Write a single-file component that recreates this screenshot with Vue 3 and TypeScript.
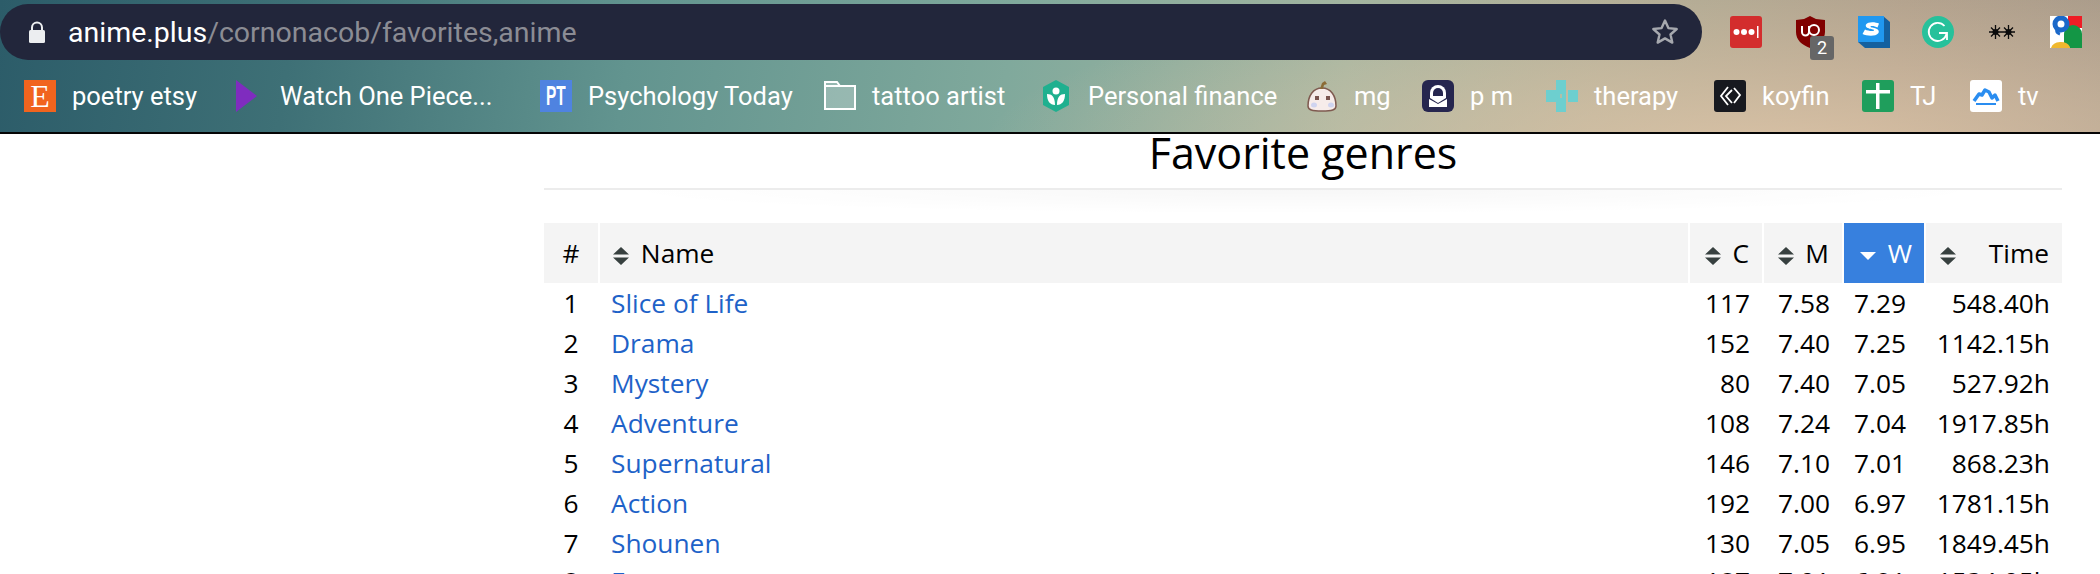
<script setup lang="ts">
type Bookmark = { icon: string; label: string; width: number };
type Genre = { name: string; c: number; m: string; w: string; time: string };

const bookmarks: Bookmark[] = [
  { icon: 'etsy', label: 'poetry etsy', width: 128 },
  { icon: 'play', label: 'Watch One Piece...', width: 228 },
  { icon: 'pt', label: 'Psychology Today', width: 204 },
  { icon: 'folder', label: 'tattoo artist', width: 136 },
  { icon: 'khan', label: 'Personal finance', width: 186 },
  { icon: 'ghost', label: 'mg', width: 36 },
  { icon: 'proton', label: 'p m', width: 44 },
  { icon: 'cross', label: 'therapy', width: 88 },
  { icon: 'koyfin', label: 'koyfin', width: 68 },
  { icon: 'tj', label: 'TJ', width: 28 },
  { icon: 'tv', label: 'tv', width: 24 },
];

const genres: Genre[] = [
  { name: 'Slice of Life', c: 117, m: '7.58', w: '7.29', time: '548.40h' },
  { name: 'Drama', c: 152, m: '7.40', w: '7.25', time: '1142.15h' },
  { name: 'Mystery', c: 80, m: '7.40', w: '7.05', time: '527.92h' },
  { name: 'Adventure', c: 108, m: '7.24', w: '7.04', time: '1917.85h' },
  { name: 'Supernatural', c: 146, m: '7.10', w: '7.01', time: '868.23h' },
  { name: 'Action', c: 192, m: '7.00', w: '6.97', time: '1781.15h' },
  { name: 'Shounen', c: 130, m: '7.05', w: '6.95', time: '1849.45h' },
  { name: 'Fantasy', c: 187, m: '7.01', w: '6.91', time: '1534.05h' },
];
</script>

<template>
  <div class="page">
    <header class="chrome">
      <div class="top-row">
        <div class="url-bar">
          <svg class="lock" width="18" height="22" viewBox="0 0 18 22">
            <path d="M4 10V6.500a5 5 0 0 1 10 0V10" fill="none" stroke="#eceef0" stroke-width="2" />
            <rect x="1" y="9" width="16" height="13" rx="1.500" fill="#eceef0" />
          </svg>
          <span class="host">anime.plus</span><span class="path">/cornonacob/favorites,anime</span>
          <svg class="star" width="30" height="30" viewBox="0 0 30 30">
            <path d="M15 3.500l3.400 7.600 8.300.9-6.200 5.500 1.800 8.100-7.300-4.200-7.300 4.200 1.800-8.100-6.200-5.500 8.300-.9z" fill="none" stroke="#a6a8ae" stroke-width="2.400" stroke-linejoin="round" />
          </svg>
        </div>
        <div class="extensions">
          <svg class="ext" width="32" height="32" viewBox="0 0 32 32">
            <rect width="32" height="32" rx="3" fill="#d32d2d" />
            <circle cx="6.500" cy="16" r="3" fill="#fff" />
            <circle cx="14" cy="16" r="3" fill="#fff" />
            <circle cx="21.500" cy="16" r="3" fill="#fff" />
            <rect x="27" y="10" width="1.500" height="12" fill="#fff" />
          </svg>
          <div class="ublock">
            <svg width="32" height="32" viewBox="0 0 32 32">
              <path d="M16 0l6 3 9 1v12c0 8-7 13-15 16C8 29 2 24 2 16V4l8-1z" fill="#800000" />
              <path d="M8 10v6a3.500 3.500 0 0 0 7 0v-6" fill="none" stroke="#fff" stroke-width="2" />
              <circle cx="20" cy="14" r="5" fill="none" stroke="#fff" stroke-width="2" />
            </svg>
            <span class="badge">2</span>
          </div>
          <svg class="ext" width="32" height="32" viewBox="0 0 32 32">
            <path d="M25 0l7 6v26H7l-7-6z" fill="#14609f" />
            <rect width="26" height="26" fill="#2098f0" />
            <path d="M21 7.500c-3-1.500-11-2.500-13 1-2 5 9 4 8 6-1 1-6 .5-9-1l-2.500 4.500c4 2 13 3 16-1 2.500-5.500-9-5-8-6.500 1-1 5 0 7 1z" fill="#fff" />
          </svg>
          <svg class="ext" width="32" height="32" viewBox="0 0 32 32">
            <circle cx="16" cy="16" r="16" fill="#26c19b" />
            <path d="M22.500 10a9 9 0 1 0 2 8" fill="none" stroke="#fff" stroke-width="1.800" />
            <path d="M17 17h8v7" fill="none" stroke="#fff" stroke-width="1.800" />
          </svg>
          <svg class="ext stars" width="26" height="14" viewBox="0 0 26 14">
            <path d="M6.500 0v14M0 7h13M2 2.500l9 9M11 2.500l-9 9M19.500 0v14M13 7h13M15 2.500l9 9M24 2.500l-9 9" fill="none" stroke="#0b0b0b" stroke-width="1.300" />
            <circle cx="6.500" cy="7" r="3" fill="#0b0b0b" />
            <circle cx="19.500" cy="7" r="3" fill="#0b0b0b" />
          </svg>
          <svg class="ext" width="32" height="32" viewBox="0 0 32 32">
            <rect width="32" height="32" fill="#fff" />
            <rect x="18" width="14" height="12" fill="#ee1c25" />
            <path d="M14 32V18a9 9 0 0 1 18 0v14z" fill="#139645" />
            <path d="M1 32a10 8 0 0 1 19-1v1z" fill="#f0b82e" />
            <circle cx="11" cy="8" r="6" fill="none" stroke="#1a68c9" stroke-width="5" />
            <path d="M7 13c-1 3 0 4 3 5" fill="none" stroke="#1a68c9" stroke-width="3" />
          </svg>
        </div>
      </div>
      <nav class="bookmarks">
        <a v-for="b in bookmarks" :key="b.label" class="bookmark">
          <span v-if="b.icon === 'etsy'" class="icon etsy">E</span>
          <span v-else-if="b.icon === 'pt'" class="icon pt"><span>PT</span></span>
          <svg v-else class="icon" width="32" height="32" viewBox="0 0 32 32">
            <path v-if="b.icon === 'play'" d="M0 0l21 16-21 16z" fill="#7f2cbf" transform="translate(4 0)" />
            <g v-else-if="b.icon === 'folder'">
              <path d="M1 2h12l3 4h15v23H1z" fill="rgba(255,255,255,.25)" stroke="#fff" stroke-width="2" />
              <path d="M1 6h15" stroke="#fff" stroke-width="2" />
            </g>
            <g v-else-if="b.icon === 'khan'">
              <path d="M16 0l13 7v18l-13 7-13-7V7z" fill="#1fb08f" />
              <circle cx="16" cy="11" r="3.500" fill="#fff" />
              <path d="M7 14c5 0 8 3 8 11-5 0-8-4-8-11zM25 14c-5 0-8 3-8 11 5 0 8-4 8-11z" fill="#fff" />
            </g>
            <g v-else-if="b.icon === 'ghost'">
              <path d="M16 8c9 0 14 8 14 18 0 4-4 5-14 5S2 30 2 26C2 16 7 8 16 8z" fill="#f6ecea" stroke="#7f5a50" stroke-width="1.500" />
              <path d="M14 9l2-6 3-2 2 3-3 1-1 4z" fill="#8b6b35" />
              <rect x="9" y="16" width="4" height="4" fill="#7a5550" />
              <rect x="20" y="16" width="4" height="4" fill="#7a5550" />
              <ellipse cx="8" cy="25" rx="3" ry="2.500" fill="#cfd4f0" />
              <ellipse cx="25" cy="25" rx="3" ry="2.500" fill="#cfd4f0" />
            </g>
            <g v-else-if="b.icon === 'proton'">
              <rect width="32" height="32" rx="6" fill="#26264f" />
              <path d="M8 18v-5a8 8 0 0 1 16 0v5l-8 5z" fill="#fff" />
              <path d="M11 16v-3a5 5 0 0 1 10 0v3z" fill="#26264f" />
              <path d="M7 19l9 5 9-5v8H7z" fill="#fff" />
            </g>
            <g v-else-if="b.icon === 'cross'">
              <path d="M10 0h10v32H10zM0 10h10v12H0zM22 10h10v12H22z" fill="#6dcfcf" />
              <rect x="14" y="14" width="2" height="4" fill="#b0c0a8" />
            </g>
            <g v-else-if="b.icon === 'koyfin'">
              <rect width="32" height="32" rx="3" fill="#17191f" />
              <path d="M14 7l-7 9 7 9M18 10l-6 6 6 7M20 8l6 7-6 8" fill="none" stroke="#fff" stroke-width="1.800" />
            </g>
            <g v-else-if="b.icon === 'tj'">
              <rect width="32" height="32" rx="3" fill="#1f9e5c" />
              <path d="M14 3h3.500v26H14zM4 10h24v3.500H4z" fill="#fff" />
            </g>
            <g v-else-if="b.icon === 'tv'">
              <rect width="32" height="32" rx="3" fill="#fff" />
              <path d="M4 21l5-7 3 1 3-5 4 2 3 6 3-3 3 6" fill="none" stroke="#2a8df0" stroke-width="3.500" stroke-linejoin="round" />
              <path d="M6 24h20" stroke="#2a8df0" stroke-width="2" />
            </g>
          </svg>
          <span class="label" :style="{ width: b.width + 'px' }">{{ b.label }}</span>
        </a>
      </nav>
    </header>

    <main class="content">
      <h2 class="title">Favorite genres</h2>
      <table class="genres">
        <colgroup>
          <col class="col-rank" />
          <col />
          <col class="col-c" />
          <col class="col-m" />
          <col class="col-w" />
          <col class="col-time" />
        </colgroup>
        <thead>
          <tr>
            <th class="rank">#</th>
            <th class="name-head">
              <svg class="sort" width="16" height="18" viewBox="0 0 16 18"><path d="M8 0l8 7.500H0zM0 10.500h16L8 18z" fill="#37403f" /></svg>
              Name
            </th>
            <th class="num">
              <svg class="sort" width="16" height="18" viewBox="0 0 16 18"><path d="M8 0l8 7.500H0zM0 10.500h16L8 18z" fill="#37403f" /></svg>
              C
            </th>
            <th class="num">
              <svg class="sort" width="16" height="18" viewBox="0 0 16 18"><path d="M8 0l8 7.500H0zM0 10.500h16L8 18z" fill="#37403f" /></svg>
              M
            </th>
            <th class="num active">
              <svg class="sort" width="16" height="18" viewBox="0 0 16 18"><path d="M0 5h16l-8 8z" fill="#fff" /></svg>
              W
            </th>
            <th class="num time-head">
              <svg class="sort" width="16" height="18" viewBox="0 0 16 18"><path d="M8 0l8 7.500H0zM0 10.500h16L8 18z" fill="#37403f" /></svg>
              <span>Time</span>
            </th>
          </tr>
        </thead>
        <tbody>
          <tr v-for="(g, i) in genres" :key="g.name">
            <td class="rank">{{ i + 1 }}</td>
            <td class="name"><a>{{ g.name }}</a></td>
            <td class="val">{{ g.c }}</td>
            <td class="val">{{ g.m }}</td>
            <td class="val w-val">{{ g.w }}</td>
            <td class="val">{{ g.time }}</td>
          </tr>
        </tbody>
      </table>
    </main>
  </div>
</template>

<style scoped>
.page {
  width: 2100px;
  height: 574px;
  overflow: hidden;
  background: #fff;
  font-family: "Open Sans", "Noto Sans", sans-serif;
}
.chrome {
  height: 132px;
  box-sizing: content-box;
  border-bottom: 2px solid #050505;
  background:
    radial-gradient(ellipse 800px 170px at 1780px 150px, rgba(226, 200, 170, .8), rgba(226, 200, 170, 0) 100%),
    linear-gradient(98deg, #2c5c69 0%, #3e7076 14%, #62948f 30%, #80a99c 48%, #a4b5a0 64%, #b0ad96 76%, #b0a08c 90%, #a99b8a 100%);
  font-family: Roboto, "Liberation Sans", sans-serif;
}
.top-row {
  display: flex;
  align-items: flex-start;
  padding-top: 4px;
}
.url-bar {
  display: flex;
  align-items: center;
  width: 1702px;
  height: 56px;
  padding-left: 28px;
  box-sizing: border-box;
  border-radius: 28px;
  background: #22263b;
  font-size: 28.500px;
}
.lock {
  margin-right: 22px;
}
.host {
  color: #fff;
}
.path {
  color: #8b8c94;
}
.star {
  margin-left: auto;
  margin-right: 22px;
}
.extensions {
  display: flex;
  align-items: center;
  gap: 32px;
  margin: 12px 0 0 28px;
}
.ublock {
  position: relative;
  width: 32px;
  height: 32px;
}
.badge {
  position: absolute;
  left: 16px;
  top: 20px;
  width: 24px;
  height: 24px;
  border-radius: 3px;
  background: #666;
  color: #fff;
  font-size: 18px;
  line-height: 24px;
  text-align: center;
}
.stars {
  margin: 0 3px;
}
.bookmarks {
  display: flex;
  align-items: center;
  gap: 32px;
  height: 32px;
  margin-top: 20px;
  padding-left: 24px;
}
.bookmark {
  display: flex;
  align-items: center;
  gap: 16px;
  color: #fff;
  font-size: 25.500px;
  white-space: nowrap;
}
.icon {
  flex: none;
  width: 32px;
  height: 32px;
}
.etsy {
  background: #f1641e;
  color: #fff;
  font-family: "Liberation Serif", serif;
  font-size: 32px;
  line-height: 32px;
  text-align: center;
}
.pt {
  background: #4f83e0;
  color: #fff;
  font-family: "Liberation Sans", sans-serif;
  font-weight: 700;
  line-height: 32px;
  text-align: center;
}
.pt span {
  display: inline-block;
  font-size: 28px;
  transform: scaleX(.55);
  margin-left: -6px;
  margin-right: -6px;
}
.content {
  position: relative;
  width: 1518px;
  margin-left: 544px;
}
.title {
  height: 54px;
  margin: 0;
  border-bottom: 2px solid #ececec;
  color: #000;
  font-size: 43px;
  font-weight: 400;
  line-height: 38px;
  text-align: center;
}
.title::after {
  content: "";
  position: absolute;
  left: 60px;
  right: 60px;
  top: 56px;
  height: 24px;
  background: radial-gradient(ellipse 50% 100% at 50% 0, rgba(0, 0, 0, .03), rgba(0, 0, 0, 0));
}
.genres {
  width: calc(100% + 4px);
  margin: 33px -2px 0;
  border-collapse: separate;
  border-spacing: 2px 0;
  table-layout: fixed;
  font-size: 26.300px;
  line-height: 40px;
}
.col-rank {
  width: 54px;
}
.col-c {
  width: 72px;
}
.col-m {
  width: 78px;
}
.col-w {
  width: 80px;
}
.col-time {
  width: 136px;
}
th {
  position: relative;
  height: 60px;
  padding: 0;
  background: #f4f4f4;
  color: #000;
  font-weight: 400;
}
td {
  height: 40px;
  padding: 0;
  color: #000;
}
tbody tr:last-child td {
  height: 36px;
  padding-bottom: 4px;
  line-height: 36px;
}
.rank {
  text-align: center;
}
.name-head {
  padding-left: 13px;
  text-align: left;
}
.name-head .sort {
  margin-right: 5px;
}
.sort {
  vertical-align: -2px;
}
.num {
  padding-right: 13px;
  text-align: right;
}
.num .sort {
  margin-right: 5px;
}
.time-head {
  padding-left: 14px;
  text-align: left;
}
.time-head span {
  float: right;
}
.active {
  background: #3780de;
  color: #fff;
  padding-right: 12px;
}
.name {
  padding-left: 11px;
}
.name a {
  color: #1e62c8;
}
.val {
  padding-right: 12px;
  text-align: right;
}
.w-val {
  padding-right: 18px;
}
</style>

<style>
html, body {
  margin: 0;
  overflow: hidden;
}
</style>
